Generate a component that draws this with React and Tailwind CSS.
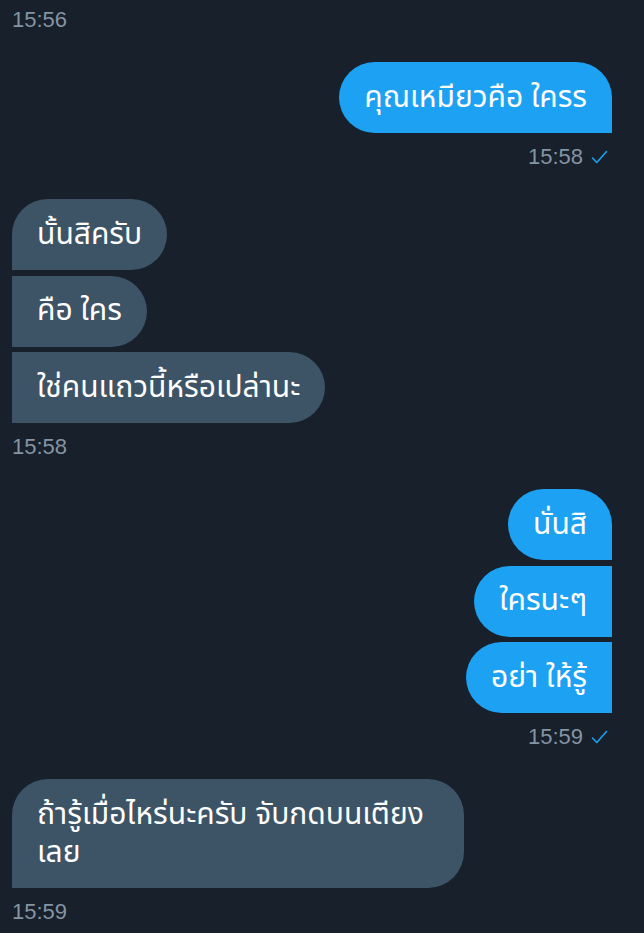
import React from "react";

const THAI = { fontFamily: '"Noto Sans Thai", "Noto Sans", "Liberation Sans", sans-serif' };

const Check = () => (
  <svg width="17" height="15" viewBox="0 0 17 15" className="ml-[8px]">
    <path d="M1.5 8 L5.8 12.5 L15.5 1.5" fill="none" stroke="#1da1f2" strokeWidth="1.6" strokeLinecap="round" strokeLinejoin="round" />
  </svg>
);

const Time = ({ children, sent }) => (
  <div
    className={`mt-[13px] flex items-center h-[22px] text-[22px] leading-[22px] text-[#8494a3] ${sent ? "justify-end pr-[4px]" : ""}`}
    style={{ fontFamily: '"Liberation Sans", Arial, sans-serif' }}
  >
    {children}
    {sent && <Check />}
  </div>
);

// position: first | middle | last | single
const radius = (sent, pos) => {
  if (sent) {
    if (pos === "single" || pos === "first") return "rounded-[36px] rounded-br-none";
    return "rounded-[36px] rounded-r-none";
  }
  if (pos === "single" || pos === "first") return "rounded-[36px] rounded-bl-none";
  return "rounded-[36px] rounded-l-none";
};

const Bubble = ({ children, sent, pos }) => (
  <div
    className={`max-w-[452px] px-[25px] py-[16.5px] text-[30px] leading-[38px] text-white ${
      sent ? "self-end bg-[#1da1f2]" : "self-start bg-[#3d5466]"
    } ${radius(sent, pos)}`}
    style={THAI}
  >
    {children}
  </div>
);

const Group = ({ sent, items }) => (
  <div className="mt-[31px] flex flex-col gap-[5.5px]">
    {items.map((t, i) => {
      const pos =
        items.length === 1 ? "single" : i === 0 ? "first" : i === items.length - 1 ? "last" : "middle";
      return (
        <Bubble key={i} sent={sent} pos={pos}>
          {t}
        </Bubble>
      );
    })}
  </div>
);

export default function App() {
  return (
    <div className="w-[644px] h-[933px] overflow-hidden bg-[#17202b]">
      <div className="pl-[12px] pr-[32px]">
        <div className="-mt-[4px]">
          <Time>15:56</Time>
        </div>

        <Group sent items={["คุณเหมียวคือ ใครร"]} />
        <Time sent>15:58</Time>

        <Group items={["นั้นสิครับ", "คือ ใคร", "ใช่คนแถวนี้หรือเปล่านะ"]} />
        <Time>15:58</Time>

        <Group sent items={["นั่นสิ", "ใครนะๆ", "อย่า ให้รู้"]} />
        <Time sent>15:59</Time>

        <Group items={["ถ้ารู้เมื่อไหร่นะครับ จับกดบนเตียง เลย"]} />
        <Time>15:59</Time>
      </div>
    </div>
  );
}
